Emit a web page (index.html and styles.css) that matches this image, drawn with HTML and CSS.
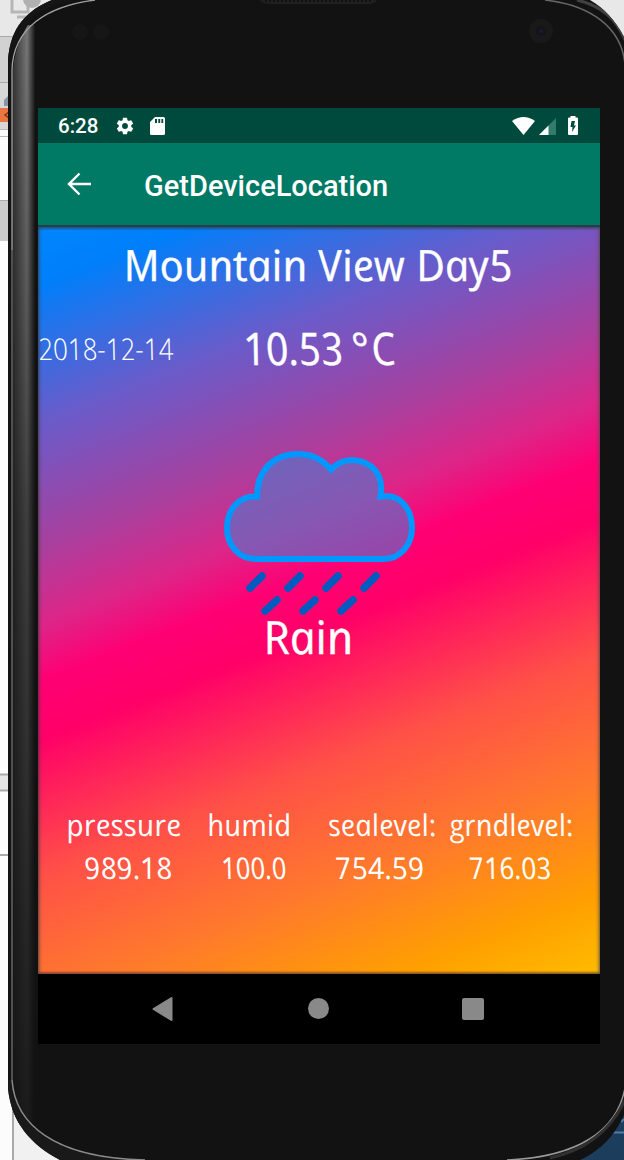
FILE: index.html
```html
<!DOCTYPE html>
<html lang="en">
<head>
<meta charset="utf-8">
<title>GetDeviceLocation</title>
<link rel="stylesheet" href="styles.css">
</head>
<body>
<main class="desktop">
  <svg class="device" viewBox="0 0 624 1160" width="624" height="1160" aria-hidden="true">
    <defs>
      <linearGradient id="side"><stop offset="0" stop-color="#303030"/><stop offset=".35" stop-color="#555"/><stop offset=".65" stop-color="#777"/><stop offset="1" stop-color="#151515"/></linearGradient>
      <linearGradient id="fade" x2="0" y2="1"><stop offset="0" stop-color="#111" stop-opacity="0"/><stop offset=".22" stop-color="#111" stop-opacity=".25"/><stop offset=".45" stop-color="#111" stop-opacity=".55"/><stop offset="1" stop-color="#111" stop-opacity=".9"/></linearGradient>
      <clipPath id="shell"><path d="M52 0C27 10 10 28 8 60V1088C11 1122 31 1145 60 1160H580C603 1149 615 1134 624 1115V37C615 20 604 8 590 0Z"/></clipPath>
    </defs>
    <rect width="624" height="1160" fill="#fcfcfc"/>
    <rect width="60" height="36" fill="#e8e8e8"/>
    <path d="M12 0V12H28V0M17 17H34" fill="none" stroke="#b6b6b6" stroke-width="3"/>
    <circle cx="32" cy="-1" r="9" fill="#b0b0b0"/>
    <rect y="36" width="20" height="46" fill="#d2d2d2"/><path d="M0 36.500H20M0 82.500H9" stroke="#aaa"/>
    <rect y="83" width="9" height="47" fill="#d7d7d7"/>
    <path d="M4 100L9 95V106H4Z" fill="#8797a6"/>
    <rect y="108" width="9" height="14" fill="#e87542"/><path d="M9 112L5 115L9 118" fill="none" stroke="#843414" stroke-width="1.500"/>
    <path d="M0 129.500H9M0 136.500H9" stroke="#bbb"/>
    <rect y="200" width="9" height="41" fill="#ccc"/><path d="M0 200.500H9" stroke="#aaa"/>
    <rect y="774" width="9" height="17" fill="#e5e5e5"/><path d="M0 774.500H9M0 790.500H9M0 855H9" stroke="#aaa" stroke-width="2"/>
    <rect x="13" y="1105" width="60" height="55" fill="#f1f1f1"/><path d="M13 1105V1160" stroke="#aaa" stroke-width="2"/>
    <rect x="575" y="0" width="49" height="45" fill="#e8e8e8"/>
    <rect x="575" y="1110" width="49" height="50" fill="#1c3d5c"/><path d="M610 1132.500H624M621 1122L624 1119" stroke="#4f7ca8" stroke-width="2"/>
    <g clip-path="url(#shell)">
      <rect width="624" height="1160" fill="#121212"/>
      <rect x="12" y="25" width="23" height="1100" fill="url(#side)"/>
      <rect x="12" y="25" width="23" height="1100" fill="url(#fade)"/>
      <path d="M36 14C65-2 80 0 100 0H0V80H12C13 52 22 30 36 14Z" fill="#151515"/>
      <path d="M11 1080C14 1127 55 1159 145 1160H0V1080Z" fill="#191919"/>
      <path d="M12 1080V70C13 28 47 6 95 0" fill="none" stroke="#a0a0a0" stroke-width="1.300"/>
      <path d="M12 1080V250" stroke="#505050" stroke-width="2"/>
      <path d="M12 1080C15 1123 52 1158 145 1160" fill="none" stroke="#8b8b8b" stroke-width="1.500"/>
      <path d="M545 0C590 5 622 27 625 65" fill="none" stroke="#666" stroke-width="1.500"/>
      <path d="M577 0C602 6 616 19 625 40" fill="none" stroke="#404040" stroke-width="3"/>
      <path d="M507 1160C578 1157 617 1131 625 1088" fill="none" stroke="#999" stroke-width="1.500"/>
      <path d="M550 1158C590 1149 612 1128 625 1100" fill="none" stroke="#303030" stroke-width="3"/>
      <path d="M260 0Q262 4 270 4H366Q375 4 377 0Z" fill="#202020"/>
      <path d="M265 1H373" stroke="#111" stroke-width="2" stroke-dasharray="2 2"/>
      <circle cx="541" cy="31" r="12" fill="#19191a"/><circle cx="541" cy="31" r="5" fill="#15141b"/><circle cx="541" cy="31" r="2" fill="#1c1a30"/>
      <circle cx="80" cy="32" r="8" fill="#161616"/><circle cx="101" cy="32" r="8" fill="#161616"/>
    </g>
  </svg>

  <section class="screen">
    <header class="status">
      <span class="clock">6:28</span>
      <svg class="gear" width="20" height="20" viewBox="0 0 24 24"><path fill="#fff" fill-rule="evenodd" d="M19.430 12.980c.04-.32.07-.64.07-.98s-.03-.66-.07-.98l2.110-1.650c.19-.15.24-.42.12-.64l-2-3.460c-.12-.22-.39-.3-.61-.22l-2.490 1c-.52-.4-1.080-.73-1.690-.98l-.38-2.650C14.460 2.180 14.250 2 14 2h-4c-.25 0-.46.18-.49.42l-.38 2.650c-.61.25-1.170.59-1.690.98l-2.490-1c-.23-.09-.49 0-.61.22l-2 3.460c-.13.22-.07.49.12.64l2.110 1.650c-.04.32-.07.65-.07.98s.03.66.07.98l-2.110 1.650c-.19.15-.24.42-.12.64l2 3.460c.12.22.39.3.61.22l2.490-1c.52.4 1.080.73 1.690.98l.38 2.650c.03.24.24.42.49.42h4c.25 0 .46-.18.49-.42l.38-2.650c.61-.25 1.170-.59 1.690-.98l2.490 1c.23.09.49 0 .61-.22l2-3.460c.12-.22.07-.49-.12-.64zM12 15.500A3.500 3.500 0 1 1 12 8.500A3.500 3.500 0 0 1 12 15.500z"/></svg>
      <svg class="card" width="15" height="18" viewBox="0 0 15 18"><path fill="#fff" fill-rule="evenodd" d="M5 0H13.500Q15 0 15 1.500V16.500Q15 18 13.500 18H1.500Q0 18 0 16.500V5ZM5 2V6H7V2ZM8.300 2V6H10.200V2ZM11.400 2V6H13.200V2Z"/></svg>
      <span class="spacer"></span>
      <svg class="wifi" width="23" height="18" viewBox="0 0 23 18"><path fill="#fff" d="M0 4Q11.500-4 23 4L11.500 18Z"/></svg>
      <svg class="signal" width="17" height="17" viewBox="0 0 17 17"><path fill="#327c6c" d="M17 0V17H0Z"/><path fill="#fff" d="M9.500 7.500V17H0Z"/></svg>
      <svg class="battery" width="10" height="19" viewBox="0 0 10 19"><path fill="#fff" d="M2.500 0H7.500V1.500H9Q10 1.500 10 2.500V18Q10 19 9 19H1Q0 19 0 18V2.500Q0 1.500 1 1.500H2.500Z"/><path fill="#004c3e" d="M7 5H3.500L2.500 11H4.500L4 16L8 9.500H6Z"/></svg>
    </header>
    <nav class="appbar">
      <svg width="24" height="24" viewBox="0 0 24 24"><path d="M24 12H2M12.500 1.500L2 12L12.500 22.500" fill="none" stroke="#fff" stroke-width="2.400"/></svg>
      <h1>GetDeviceLocation</h1>
    </nav>
    <div class="weather">
      <svg class="city" width="562" height="72"><text class="script" font-size="43" transform="translate(88 54) skewX(12)" textLength="389" lengthAdjust="spacingAndGlyphs">Mountain View Day5</text></svg>
      <svg class="reading" width="562" height="65"><text class="script thin" font-size="30" transform="translate(2 61) skewX(12)" textLength="135" lengthAdjust="spacingAndGlyphs">2018-12-14</text><text class="script" font-size="45" transform="translate(208 66) skewX(12)" textLength="152" lengthAdjust="spacingAndGlyphs">10.53 °C</text></svg>
      <svg class="cloud" width="192" height="166" viewBox="224 450 192 166">
        <path d="M257 496.500C257 471 273 454 298 454C313 454 323 460 331 469.500C345 455 365 459 375 470C382 478 382 487 380.500 496.500C402 493 412 511 412 528C412 546 399 559 384 559H256C239 559 227 546 227 528C227 509 240 495 257 496.500Z" fill="#477ed2" fill-opacity=".58" stroke="#0098ff" stroke-width="6"/>
        <path d="M262 576L250 588M300 576L288 588M338 576L326 588M376 576L364 588M277 600L265 611M315 600L303 611M353 600L341 611" fill="none" stroke="#005bc0" stroke-width="7.500" stroke-linecap="round"/>
      </svg>
      <svg class="condition" width="562" height="60"><text class="script" font-size="46" transform="translate(228 38) skewX(12)" textLength="90" lengthAdjust="spacingAndGlyphs">Rain</text></svg>
      <div class="metrics">
        <svg width="150" height="90"><text class="script" transform="translate(30 36) skewX(12)" textLength="115" lengthAdjust="spacingAndGlyphs">pressure</text><text class="script" transform="translate(48 79) skewX(12)" textLength="88" lengthAdjust="spacingAndGlyphs">989.18</text></svg>
        <svg width="120" height="90"><text class="script" transform="translate(21 36) skewX(12)" textLength="84" lengthAdjust="spacingAndGlyphs">humid</text><text class="script" transform="translate(35 79) skewX(12)" textLength="65" lengthAdjust="spacingAndGlyphs">100.0</text></svg>
        <svg width="134" height="90"><text class="script" transform="translate(22 36) skewX(12)" textLength="108" lengthAdjust="spacingAndGlyphs">sealevel:</text><text class="script" transform="translate(29 79) skewX(12)" textLength="89" lengthAdjust="spacingAndGlyphs">754.59</text></svg>
        <svg width="158" height="90"><text class="script" transform="translate(9 36) skewX(12)" textLength="124" lengthAdjust="spacingAndGlyphs">grndlevel:</text><text class="script" transform="translate(29 79) skewX(12)" textLength="82" lengthAdjust="spacingAndGlyphs">716.03</text></svg>
      </div>
    </div>
    <footer class="navigation">
      <svg width="22" height="26" viewBox="0 0 22 26"><path d="M20.500 2V24L2.500 13Z" fill="#898989" stroke="#898989" stroke-width="2" stroke-linejoin="round"/></svg>
      <span class="home"></span>
      <span class="recent"></span>
    </footer>
  </section>
</main>
</body>
</html>
```
FILE: styles.css
```css
* { box-sizing: border-box; }
body { margin: 0; font-family: Roboto, sans-serif; color: #fff; }
.desktop { position: relative; width: 624px; height: 1160px; padding: 108px 24px 116px 38px; overflow: hidden; }
.device { position: absolute; inset: 0; z-index: -1; }
svg { display: block; flex-shrink: 0; }
.screen { width: 562px; height: 936px; }
.status { display: flex; align-items: center; height: 35px; padding: 0 21px 0 20px; background: #004a3d; }
.clock { width: 40px; font-size: 20.5px; font-weight: 500; line-height: 36px; white-space: nowrap; }
.gear { margin-left: 17px; }
.card { margin-left: 15px; }
.spacer { flex: 1; }
.signal { margin: 2px 0 0 4px; }
.battery { margin-left: 12px; margin-right: 1px; }
.appbar { display: flex; align-items: center; height: 82px; padding: 0 29px; background: #007965; }
.appbar h1 { margin: 4px 0 0 53px; font-size: 29px; font-weight: 500; line-height: 40px; white-space: nowrap; }
.weather { display: flex; flex-direction: column; height: 749px; border-top: 2px solid #233f4c; background: linear-gradient(158.4deg, #0086ff 0%, #007ffb 6%, #685ccb 20%, #a8409e 33%, #dc2688 41%, #ff0074 47%, #ff0068 53%, #ff5048 67%, #ff7a2c 80%, #ffa000 92%, #ffbc00 100%); box-shadow: inset 2px 0 3px #4448, inset -2px 0 3px #5558, inset 0 -2px 2px #5227, inset 0 2px 2px #3337; }
.script { font-family: "Open Sans", sans-serif; font-style: italic; font-weight: 400; fill: #fff; stroke: #fff; stroke-width: .35px; }
.thin { font-weight: 300; stroke: none; }
.cloud { margin: 86px 0 0 186px; }
.condition { overflow: visible; }
.metrics { display: flex; margin-top: 124px; }
.metrics .script { font-size: 30px; stroke: none; }
.metrics svg, .reading { overflow: visible; }
.navigation { display: flex; align-items: center; height: 70px; padding-left: 113px; background: #000; }
.home { width: 21px; height: 21px; margin: -1px 0 0 135px; border-radius: 50%; background: #898989; }
.recent { width: 22px; height: 22px; margin-left: 133px; border-radius: 2px; background: #898989; }
```
